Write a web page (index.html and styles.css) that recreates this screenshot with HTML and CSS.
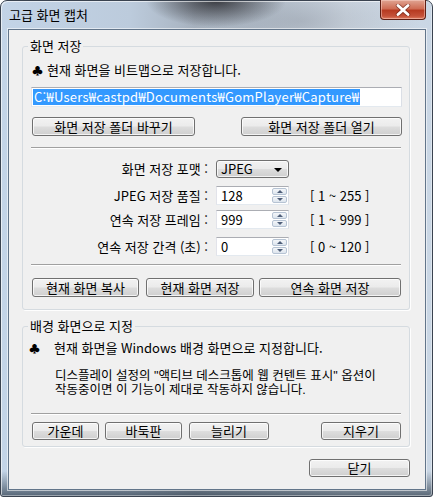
FILE: index.html
```html
<!DOCTYPE html>
<html lang="ko">
<head>
<meta charset="utf-8">
<title>고급 화면 캡처</title>
<link rel="stylesheet" href="styles.css">
</head>
<body>
<div class="window">
  <div class="titlebar">
    <span class="title">고급 화면 캡처</span>
    <div class="close">
      <svg width="20" height="12" viewBox="0 0 20 12">
        <path d="M5 1.5 L15 10.5 M15 1.5 L5 10.5" stroke="#5a1a10" stroke-width="4.4" stroke-linecap="round" fill="none" opacity="0.55"/>
        <path d="M5 1.5 L15 10.5 M15 1.5 L5 10.5" stroke="#ffffff" stroke-width="2.8" stroke-linecap="round" fill="none"/>
      </svg>
    </div>
  </div>
  <div class="client">
    <fieldset class="group g1">
      <legend>화면 저장</legend>
      <p class="note"><span class="club">♣</span>현재 화면을 비트맵으로 저장합니다.</p>
      <div class="pathbox"><span class="sel">C:₩Users₩castpd₩Documents₩GomPlayer₩Capture₩</span></div>
      <div class="row-between">
        <button class="btn b-change">화면 저장 폴더 바꾸기</button>
        <button class="btn b-open">화면 저장 폴더 열기</button>
      </div>
      <div class="sep"></div>
      <div class="form">
        <span class="lbl r1">화면 저장 포맷 :</span>
        <div class="combo r1"><span>JPEG</span><i class="tri"></i></div>
        <span class="range r1"></span>

        <span class="lbl r2">JPEG 저장 품질 :</span>
        <div class="spin r2"><span class="val">128</span><span class="arrows"><i class="up"></i><i class="dn"></i></span></div>
        <span class="range r2">[ 1 ~ 255 ]</span>

        <span class="lbl r3">연속 저장 프레임 :</span>
        <div class="spin r3"><span class="val">999</span><span class="arrows"><i class="up"></i><i class="dn"></i></span></div>
        <span class="range r3">[ 1 ~ 999 ]</span>

        <span class="lbl r4">연속 저장 간격 (초) :</span>
        <div class="spin r4"><span class="val">0</span><span class="arrows"><i class="up"></i><i class="dn"></i></span></div>
        <span class="range r4">[ 0 ~ 120 ]</span>
      </div>
      <div class="sep sep2"></div>
      <div class="btnrow">
        <button class="btn b-copy">현재 화면 복사</button>
        <button class="btn b-save">현재 화면 저장</button>
        <button class="btn b-cont">연속 화면 저장</button>
      </div>
    </fieldset>

    <fieldset class="group g2">
      <legend>배경 화면으로 지정</legend>
      <p class="note note2"><span class="club">♣</span>현재 화면을 Windows 배경 화면으로 지정합니다.</p>
      <div class="para">
        <span class="pline">디스플레이 설정의 "액티브 데스크톱에 웹 컨텐트 표시" 옵션이</span>
        <span class="pline">작동중이면 이 기능이 제대로 작동하지 않습니다.</span>
      </div>
      <div class="sep sep3"></div>
      <div class="btnrow2">
        <button class="btn b-center">가운데</button>
        <button class="btn b-tile">바둑판</button>
        <button class="btn b-stretch">늘리기</button>
        <button class="btn b-clear">지우기</button>
      </div>
    </fieldset>

    <div class="footer">
      <button class="btn b-close">닫기</button>
    </div>
  </div>
</div>
</body>
</html>
```

FILE: styles.css
```css
* { box-sizing: border-box; }
html, body { margin: 0; padding: 0; }
body {
  width: 433px;
  height: 497px;
  overflow: hidden;
  background: #ffffff;
  font-family: "Noto Sans CJK KR", "Noto Sans", sans-serif;
  font-size: 13px;
  color: #000;
}

.window {
  width: 433px;
  height: 497px;
  display: flex;
  flex-direction: column;
  border: 1px solid #3a4350;
  border-radius: 7px 7px 3px 3px;
  padding: 0 6px 6px 7px;
  background:
    radial-gradient(ellipse 70px 26px at 215px 0px, rgba(40,40,45,0.85), rgba(60,60,65,0) 100%),
    radial-gradient(ellipse 120px 40px at 300px 20px, rgba(120,125,135,0.35), rgba(120,125,135,0) 100%),
    linear-gradient(to bottom, rgba(255,255,255,0) 0px, rgba(255,255,255,0) 470px, rgba(30,45,60,0.7) 497px),
    linear-gradient(to right, #c3d4e7 0%, #bccbdc 30%, #a7b2bf 45%, #b9c5d2 60%, #d3dde8 80%, #c9d6e4 100%);
  box-shadow: inset 1px 1px 0 rgba(255,255,255,0.6), inset -1px -1px 0 rgba(255,255,255,0.4);
}

.titlebar {
  height: 28px;
  display: flex;
  align-items: flex-start;
}
.title {
  margin-top: 6px;
  margin-left: 1px;
  line-height: 16px;
  color: #000;
}
.close {
  margin-left: auto;
  margin-top: -1px;
  width: 46px;
  height: 20px;
  border: 1px solid #5d1e14;
  border-top: none;
  border-radius: 0 0 4px 4px;
  background: linear-gradient(to bottom, #e0a593 0%, #cf6d55 45%, #b73b22 55%, #c5523a 85%, #e07e62 100%);
  box-shadow: inset 0 0 0 1px rgba(255,220,210,0.45);
  display: flex;
  align-items: center;
  justify-content: center;
}
.close svg { display: block; }

.client {
  flex: 1;
  background: #f0f0f0;
  border: 1px solid #62758a;
  box-shadow: 0 0 0 1px rgba(255,255,255,0.55);
  padding: 8px 15px 0 13px;
  display: flex;
  flex-direction: column;
}

.group {
  margin: 0;
  border: 1px solid #d5dbe0;
  border-radius: 3px;
  padding: 0 7px 0 9px;
  box-shadow: 1px 1px 0 rgba(255,255,255,0.9);
}
.group legend {
  padding: 0 2px;
  margin-left: -4px;
  line-height: 16px;
}
.g1 { padding-top: 8px; padding-bottom: 12px; }
.g2 { margin-top: 8px; padding-top: 6px; padding-bottom: 6px; }

.note {
  margin: 0;
  line-height: 16px;
  display: flex;
  align-items: center;
}
.club {
  display: inline-block;
  width: 15px;
  font-size: 11px;
  line-height: 16px;
}
.note2 { margin-left: -3px; }
.note2 .club { width: 25px; }

.pathbox {
  margin-top: 9px;
  margin-left: -1px;
  height: 20px;
  background: #fff;
  border: 1px solid #abadb3;
  border-left-color: #e2e3ea;
  border-right-color: #dbdfe6;
  border-bottom-color: #e3e9ef;
  padding: 1px 1px 0 1px;
  line-height: 16px;
}
.sel {
  background: #3399ff;
  color: #fff;
  display: inline-block;
  padding: 0 1px;
  letter-spacing: 0.25px;
}

.btn {
  font-family: inherit;
  font-size: 13px;
  color: #000;
  height: 19px;
  padding: 0;
  line-height: 16px;
  border: 1px solid #707070;
  border-radius: 3px;
  background: linear-gradient(to bottom, #f2f2f2 0%, #ebebeb 48%, #dddddd 52%, #cfcfcf 100%);
  box-shadow: inset 0 0 0 1px rgba(255,255,255,0.75);
}

.row-between {
  margin-top: 10px;
  display: flex;
  justify-content: space-between;
}
.b-change { width: 163px; }
.b-open { width: 161px; }

.sep {
  height: 2px;
  border-top: 1px solid #a0a0a0;
  border-bottom: 1px solid #ffffff;
  margin-top: 11px;
  margin-left: -1px;
  margin-right: 1px;
}

.form {
  margin-top: 11px;
  display: grid;
  grid-template-columns: 176px 73px auto;
  column-gap: 8px;
  align-items: center;
}
.lbl {
  text-align: right;
  line-height: 16px;
}
.range {
  margin-left: 13px;
  line-height: 16px;
}
.r1 { margin-top: 0; }
.r2 { margin-top: 8px; }
.r3 { margin-top: 5px; }
.r4 { margin-top: 8px; }

.combo {
  height: 18px;
  border: 1px solid #707070;
  border-radius: 3px;
  background: linear-gradient(to bottom, #f2f2f2 0%, #ebebeb 48%, #dddddd 52%, #cfcfcf 100%);
  box-shadow: inset 0 0 0 1px rgba(255,255,255,0.75);
  display: flex;
  align-items: center;
  padding: 0 6px 0 4px;
  line-height: 16px;
}
.combo .tri {
  margin-left: auto;
  width: 0;
  height: 0;
  border-left: 4px solid transparent;
  border-right: 4px solid transparent;
  border-top: 4px solid #000;
  margin-top: 2px;
}

.spin {
  height: 19px;
  background: #fff;
  border: 1px solid #abadb3;
  border-left-color: #e2e3ea;
  border-right-color: #dbdfe6;
  border-bottom-color: #e3e9ef;
  display: flex;
  align-items: stretch;
  padding: 0 1px 0 4px;
}
.spin .val {
  flex: 1;
  line-height: 17px;
}
.arrows {
  width: 15px;
  display: flex;
  flex-direction: column;
  gap: 1px;
  padding: 1px 0;
}
.arrows i {
  flex: 1;
  border: 1px solid #b6c3d3;
  border-radius: 2px;
  background: linear-gradient(to bottom, #f4f6f9, #dde5ee);
  display: flex;
  align-items: center;
  justify-content: center;
}
.arrows i::after {
  content: "";
  width: 0;
  height: 0;
  border-left: 3px solid transparent;
  border-right: 3px solid transparent;
}
.arrows .up::after { border-bottom: 3px solid #4e5e79; }
.arrows .dn::after { border-top: 3px solid #4e5e79; }

.sep2 { margin-top: 8px; }

.btnrow {
  margin-top: 12px;
  display: flex;
  gap: 7px;
}
.b-copy { width: 107px; }
.b-save { width: 108px; }
.b-cont { width: 142px; margin-left: -2px; }

.para {
  margin: 13px 0 0 23px;
  display: flex;
  flex-direction: column;
  font-family: "Liberation Sans", "Noto Sans CJK KR", sans-serif;
  font-size: 12.5px;
}
.pline {
  display: block;
  height: 14px;
  line-height: 14px;
}
.sep3 { margin-top: 16px; }

.btnrow2 {
  margin-top: 7px;
  display: flex;
  gap: 6px;
}
.btnrow2 .btn { height: 18px; }
.b-center { width: 67px; }
.b-tile { width: 77px; }
.b-stretch { width: 80px; margin-left: 1px; }
.b-clear { width: 80px; margin-left: auto; margin-right: 1px; }

.footer {
  margin-top: 12px;
  display: flex;
  justify-content: flex-end;
}
.b-close { width: 101px; height: 18px; }
```
